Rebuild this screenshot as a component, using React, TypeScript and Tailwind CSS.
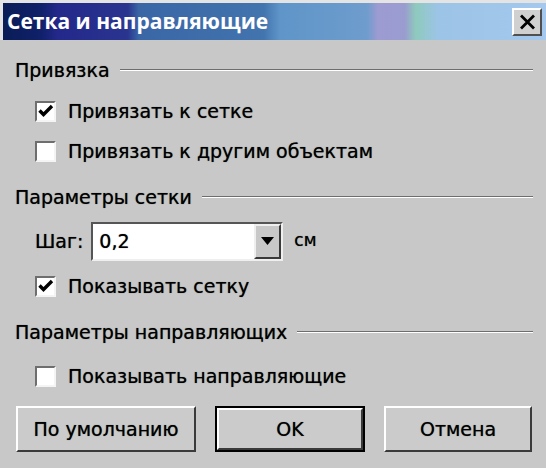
import React from "react";

const font = { fontFamily: '"DejaVu Sans", "Liberation Sans", sans-serif' };

function Check({ checked }: { checked?: boolean }) {
  return (
    <div className="w-[21px] h-[21px] bg-white border-t-2 border-l-2 border-t-[#6e6e6e] border-l-[#6e6e6e] border-b-2 border-r-2 border-b-[#f4f4f4] border-r-[#f4f4f4] flex items-center justify-center shrink-0">
      {checked && (
        <svg width="16" height="14" viewBox="0 0 16 14">
          <path d="M1.5 6.5 L5.5 10.5 L14 2" stroke="#000" strokeWidth="3.4" fill="none" />
        </svg>
      )}
    </div>
  );
}

function Header({ text }: { text: string }) {
  return (
    <div className="flex items-center pl-[15px] gap-[10px] pr-[13px]">
      <span className="text-[19px] text-black whitespace-nowrap leading-none [text-shadow:0_0_0.8px_rgba(0,0,0,0.7)]">{text}</span>
      <div className="flex-1 flex flex-col">
        <div className="h-px bg-[#6e6e6e]" />
        <div className="h-px bg-white" />
      </div>
    </div>
  );
}

function Btn({ label, w, def }: { label: string; w: string; def?: boolean }) {
  return (
    <div className={`${w} h-[46px] ${def ? "border-2 border-black" : ""} shrink-0`}>
      <div className="w-full h-full bg-[#cbcbcb] border-t-2 border-l-2 border-t-white border-l-white border-b-2 border-r-2 border-b-[#3a3a3a] border-r-[#3a3a3a] flex items-center justify-center text-[19px] text-black [text-shadow:0_0_0.8px_rgba(0,0,0,0.7)]">
        {label}
      </div>
    </div>
  );
}

const txt = "text-[19px] text-black [text-shadow:0_0_0.8px_rgba(0,0,0,0.7)]";

export default function App() {
  return (
    <div className="w-[546px] h-[468px] bg-[#c8c8c8] relative overflow-hidden" style={font}>
      <div className="h-[3px] bg-[#e4e4e4]" />
      <div className="flex">
        <div className="w-[3px] bg-[#e4e4e4]" />
        <div
          className="flex-1 h-[37px] flex items-center justify-between pl-[4px] pr-[4px]"
          style={{
            background:
              "linear-gradient(90deg,#0a1d56 0%,#10206a 7%,#23288a 10%,#2a3590 23%,#3a66a6 25%,#4274ae 48%,#5f95c9 51%,#6e9ccd 67%,#9c9bd2 69%,#9a9cd0 74%,#8ecabc 76%,#9cc4e6 80%,#a4c8ee 100%)",
          }}
        >
          <span
            className="text-white font-bold text-[21px] leading-none"
            style={{ fontFamily: '"Open Sans", "DejaVu Sans", sans-serif' }}
          >
            Сетка и направляющие
          </span>
          <div className="w-[30px] h-[28px] bg-[#d0d0d0] border-t-2 border-l-2 border-t-white border-l-white border-b-2 border-r-2 border-b-[#505050] border-r-[#505050] flex items-center justify-center">
            <svg width="17" height="16" viewBox="0 0 17 16">
              <path d="M2 1.5 L15 14.5 M15 1.5 L2 14.5" stroke="#000" strokeWidth="2.8" />
            </svg>
          </div>
        </div>
      </div>

      <div className="flex flex-col pt-[10px]">
        <div className="h-[40px] flex flex-col justify-center">
          <Header text="Привязка" />
        </div>
        <div className="h-[42px] flex items-center pl-[35px] gap-[12px]">
          <Check checked />
          <span className={txt}>Привязать к сетке</span>
        </div>
        <div className="h-[38px] flex items-center pl-[35px] gap-[12px]">
          <Check />
          <span className={txt}>Привязать к другим объектам</span>
        </div>
        <div className="h-[46px] mt-[4px] flex flex-col justify-center">
          <Header text="Параметры сетки" />
        </div>
        <div className="h-[42px] flex items-center pl-[35px]">
          <span className={`${txt} mr-[8px]`}>Шаг:</span>
          <div className="w-[192px] h-[39px] bg-white border-t-2 border-l-2 border-t-[#555] border-l-[#555] border-b-2 border-r-2 border-b-[#efefef] border-r-[#efefef] flex items-center">
            <span className={`flex-1 pl-[6px] ${txt}`}>0,2</span>
            <div className="w-[27px] h-[35px] bg-[#c8c8c8] border-t-2 border-l-2 border-t-[#efefef] border-l-[#efefef] border-b-2 border-r-2 border-b-[#3a3a3a] border-r-[#3a3a3a] flex items-center justify-center">
              <svg width="13" height="8" viewBox="0 0 13 8">
                <path d="M0 0 H13 L6.5 8 Z" fill="#000" />
              </svg>
            </div>
          </div>
          <span className="text-[17px] text-black ml-[11px] [text-shadow:0_0_0.8px_rgba(0,0,0,0.7)]">см</span>
        </div>
        <div className="h-[48px] flex items-center pl-[35px] gap-[12px]">
          <Check checked />
          <span className={txt}>Показывать сетку</span>
        </div>
        <div className="h-[44px] flex flex-col justify-center">
          <Header text="Параметры направляющих" />
        </div>
        <div className="h-[44px] flex items-center pl-[35px] gap-[12px]">
          <Check />
          <span className={txt}>Показывать направляющие</span>
        </div>
        <div className="mt-[8px] flex pl-[16px] gap-[19px]">
          <Btn label="По умолчанию" w="w-[180px]" />
          <Btn label="OK" w="w-[150px]" def />
          <Btn label="Отмена" w="w-[148px]" />
        </div>
      </div>
    </div>
  );
}
